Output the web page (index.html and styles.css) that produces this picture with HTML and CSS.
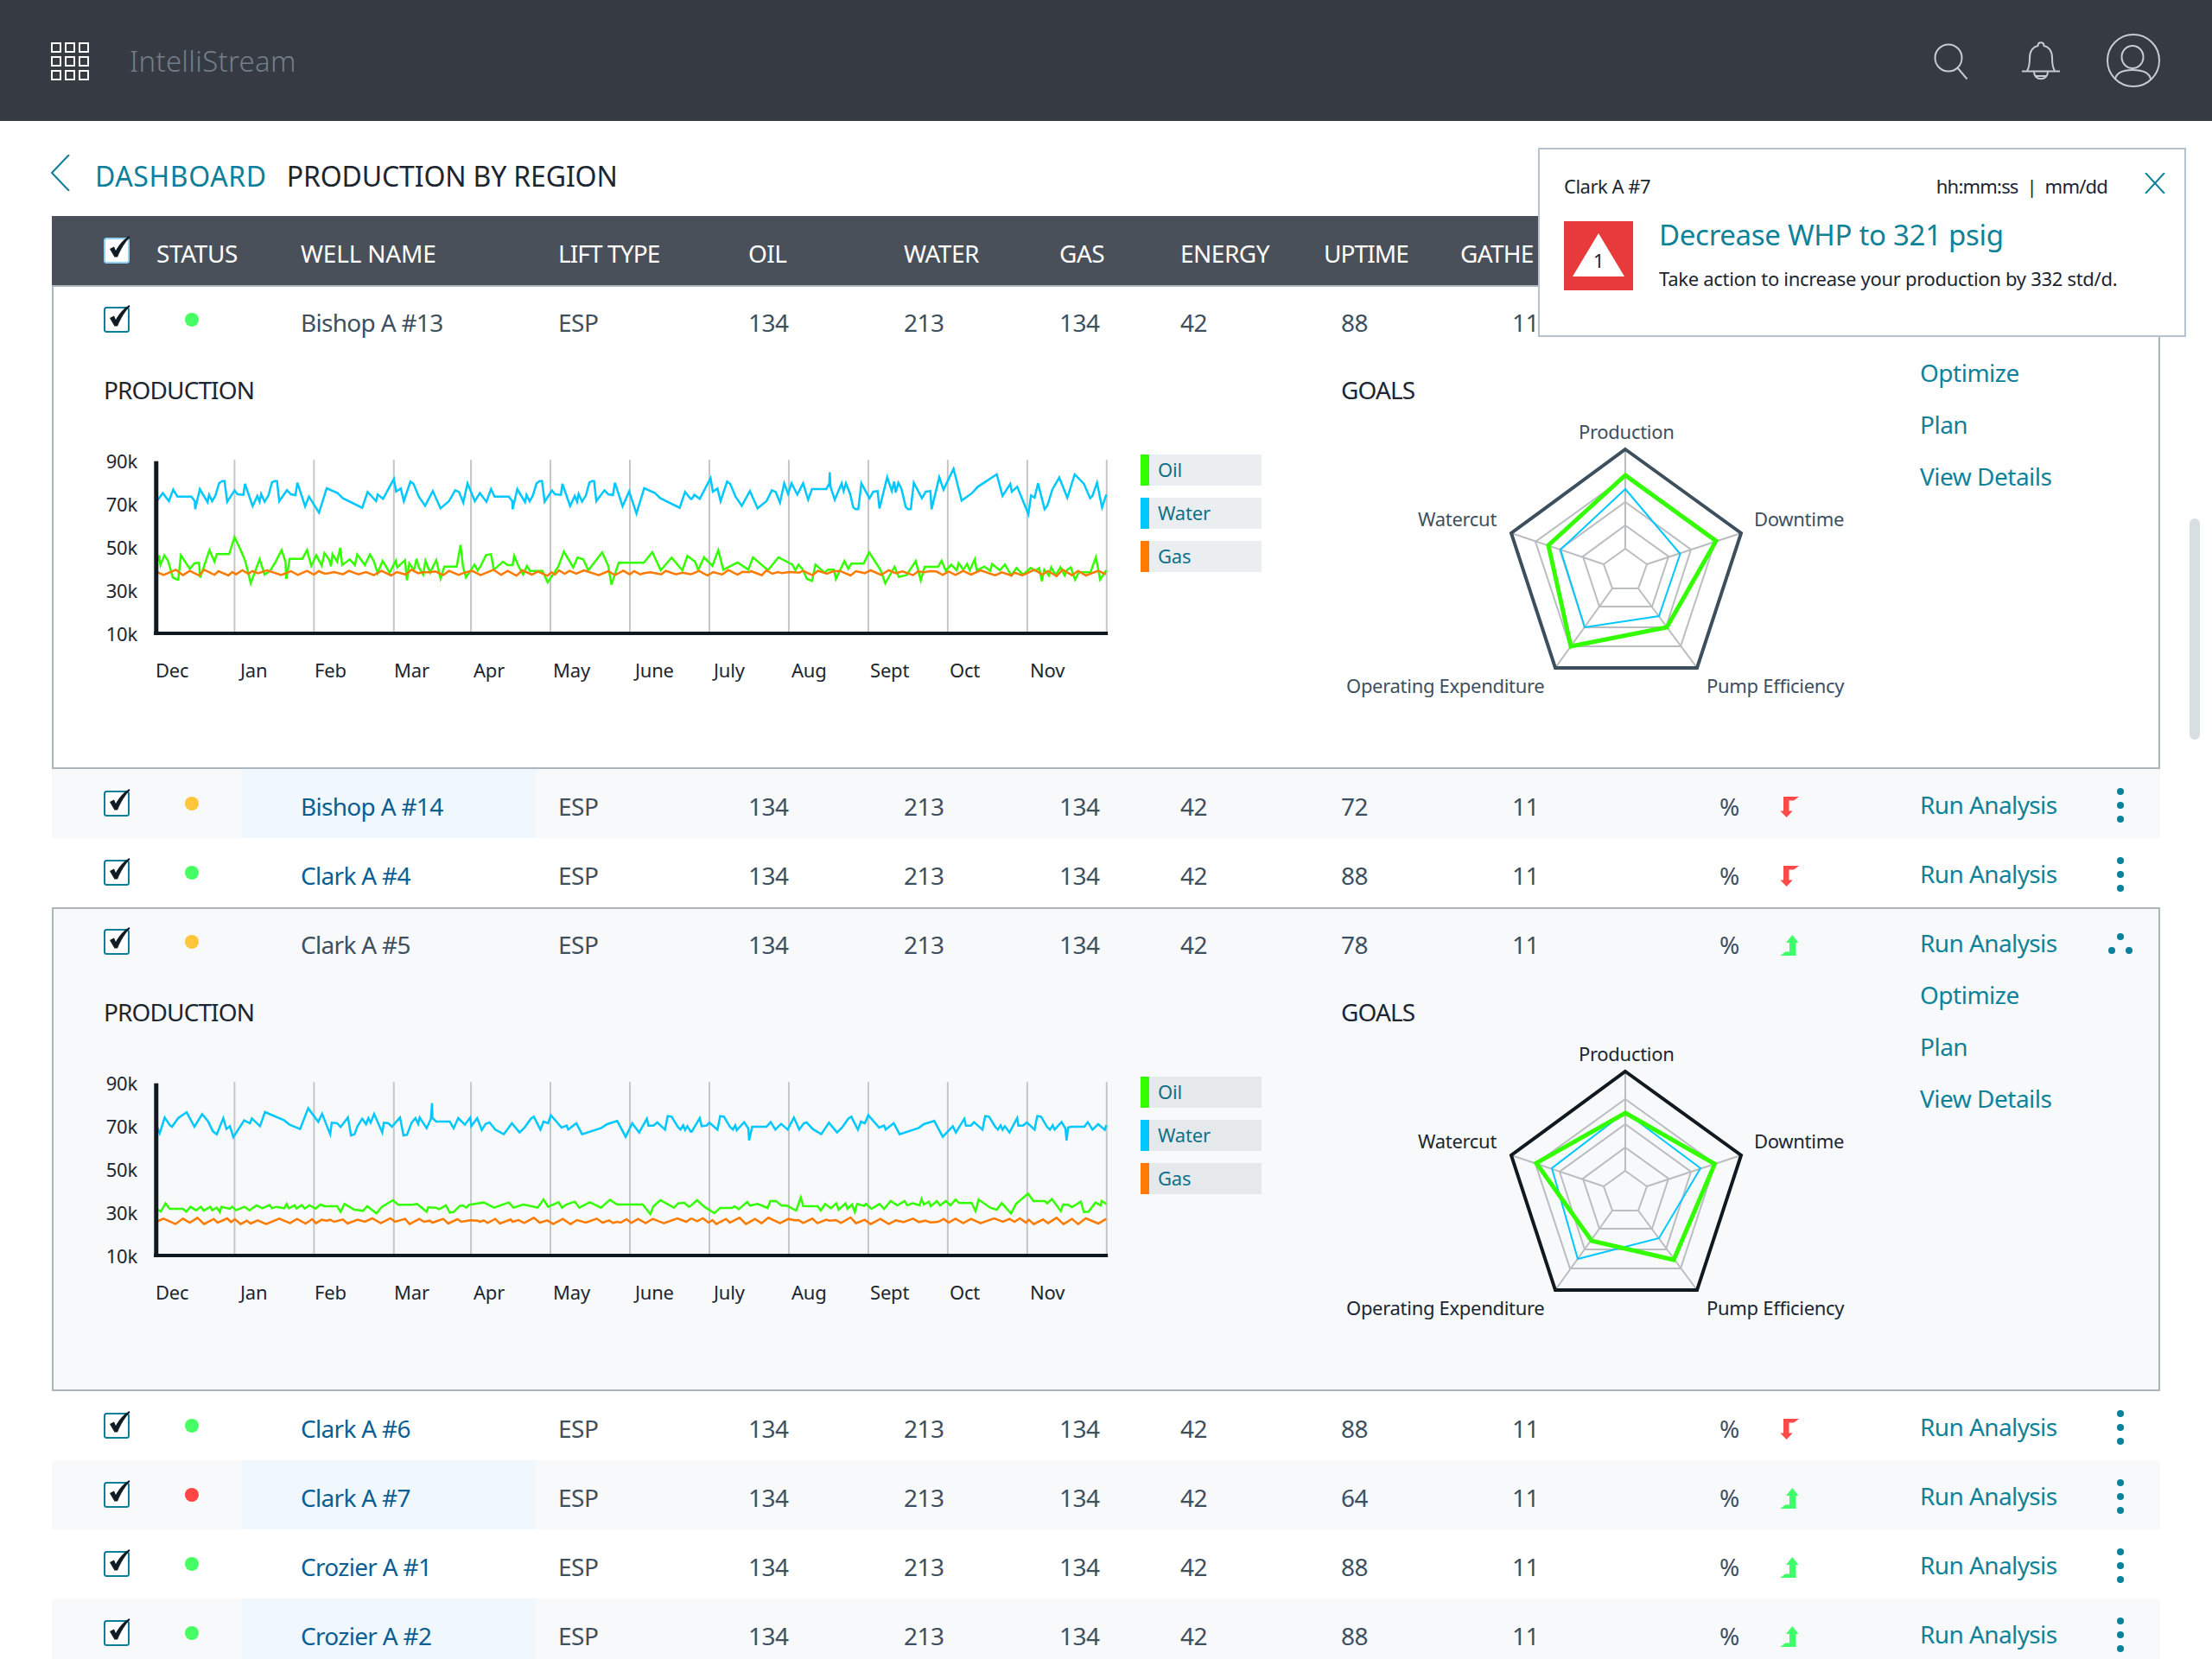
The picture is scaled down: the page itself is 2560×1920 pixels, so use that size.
FILE: index.html
```html
<!DOCTYPE html>
<html lang="en">
<head>
<meta charset="utf-8">
<title>IntelliStream</title>
<link rel="stylesheet" href="styles.css">
</head>
<body>
<svg class="defs" width="0" height="0" aria-hidden="true">
  <symbol id="chk" viewBox="0 -6 32 38">
    <rect x="1" y="1" width="28" height="28" rx="2.5" fill="var(--box-fill)" stroke="var(--box-stroke)" stroke-width="2"/>
    <path d="M7 13 L12 10.5 L14 15 C17 9 23 2 29.5 -2 L30.5 -.5 C25 5 20 13 16 22.5 L12.5 22.5 Z" fill="#111b22"/>
  </symbol>
  <symbol id="down" viewBox="0 0 22 24"><path d="M4 0 H22 L16 4.5 H10.5 V16.5 H14.7 L7.6 24 L.4 16.5 H4 Z" fill="#ff4a4a"/></symbol>
  <symbol id="up" viewBox="0 0 22 24"><path d="M14.3 0 L21.5 9 H18.5 V24 H.4 L6 19.5 H11 V9 H7 Z" fill="#3cff6a"/></symbol>
</svg>

<header class="topbar">
  <div class="apps"><i></i><i></i><i></i><i></i><i></i><i></i><i></i><i></i><i></i></div>
  <div class="brand">IntelliStream</div>
  <div class="topicons">
    <svg class="ic-search" viewBox="0 0 40 42"><ellipse cx="17" cy="17" rx="15.5" ry="15.5"/><path d="M27.5 28.5 L38.5 41.5"/></svg>
    <svg class="ic-bell" viewBox="0 0 46 46"><path d="M7 35 C9.5 31 10 27 10 20 C10 11 15 7 19.5 6 C19.5 1 26.5 1 26.5 6 C31 7 36 11 36 20 C36 27 36.5 31 39 35"/><path d="M1 35.5 H45"/><path d="M15 36 C15 47 31 47 31 36"/><path d="M17 41 H29"/></svg>
    <svg class="ic-user" viewBox="0 0 62 62"><circle cx="31" cy="31" r="30"/><ellipse cx="30" cy="27" rx="12.5" ry="13"/><path d="M10 53 C11 45 20 42 30 42 C41 42 50 45 51 53"/></svg>
  </div>
</header>

<nav class="crumbs">
  <svg class="back" viewBox="0 0 22 42"><path d="M21 0 L1 21 L21 42"/></svg>
  <a class="crumb-link">DASHBOARD</a>
  <span class="crumb-here">PRODUCTION BY REGION</span>
</nav>

<main class="table">
  <div class="row head">
    <div class="c-chk"><svg class="chk on-dark"><use href="#chk"/></svg></div>
    <div class="c-status">STATUS</div>
    <div class="c-name">WELL NAME</div>
    <div class="c-lift">LIFT TYPE</div>
    <div>OIL</div><div>WATER</div><div>GAS</div><div>ENERGY</div><div class="c-uptime-h">UPTIME</div><div class="c-gather-h">GATHERING</div>
  </div>

  <section class="expanded">
    <div class="row">
      <div class="c-chk"><svg class="chk"><use href="#chk"/></svg></div>
      <div class="c-status"><i class="dot green"></i></div>
      <div class="c-name">Bishop A #13</div>
      <div class="c-lift">ESP</div>
      <div>134</div><div>213</div><div>134</div><div>42</div><div class="c-up">88</div><div class="c-gather">11</div>
    </div>
    <div class="detail">
      <div class="d-chart">
        <div class="d-title">PRODUCTION</div>
        <div class="chart">
          <div class="ylabels"><span>90k</span><span>70k</span><span>50k</span><span>30k</span><span>10k</span></div>
          <svg class="plot" viewBox="174.72 90 2477.44 618" preserveAspectRatio="none">
            <g class="grid"><path d="M384 97V693M590 97V693M797 97V693M997 97V693M1203 97V693M1409 97V693M1615 97V693M1821 97V693M2027 97V693M2233 97V693M2439 97V693M2645 97V693"/></g>
            <polyline class="oil" points="181,460 188,428 192,462 202,428 212,448 224,505 235,512 238,512 245,428 268,475 280,456 292,454 295,505 319,410 332,450 338,424 370,424 384,365 400,410 412,448 426,525 449,442 462,495 476,482 490,452 506,410 516,450 518,510 527,440 560,440 572,410 583,465 596,428 610,464 617,420 630,445 634,466 638,425 650,450 658,402 663,462 683,442 696,462 702,425 722,462 735,425 745,448 755,490 768,447 786,488 802,447 806,470 826,445 831,515 837,456 849,480 856,440 862,470 873,495 879,447 891,488 907,445 918,508 928,467 960,467 970,392 976,465 984,505 1006,460 1014,480 1021,468 1036,427 1049,424 1056,478 1080,450 1092,462 1105,462 1109,430 1120,465 1132,495 1142,465 1150,482 1182,482 1196,522 1223,468 1238,415 1262,470 1273,436 1288,442 1301,480 1337,418 1353,465 1361,530 1380,454 1445,454 1467,417 1489,480 1517,436 1545,480 1558,430 1568,440"/>
            <polyline class="gas" points="181,485 200,496 232,478 250,497 268,482 292,498 305,478 332,496 342,483 368,498 378,486 388,494 404,480 420,492 430,483 445,490 468,480 505,496 530,483 548,496 572,482 590,495 602,483 618,492 630,490 642,486 665,494 680,482 705,494 725,486 745,497 765,482 790,498 805,486 828,495 843,478 860,490 875,487 890,487 905,484 925,497 940,482 965,496 980,488 1000,482 1022,497 1055,478 1075,496 1092,482 1115,499 1130,480 1155,495 1170,484 1195,499 1205,487 1215,495 1225,480 1240,492 1252,482 1270,492 1290,480 1328,497 1353,483 1370,497 1392,481 1408,494 1420,483 1435,494 1447,490 1462,487 1490,494 1502,482 1528,494 1545,488 1568,494"/>
            <polyline class="water" points="181,243 198,212 214,240 225,200 236,224 272,224 281,240 282,268 294,198 314,243 318,218 326,240 334,222 344,178 352,170 358,170 365,242 384,203 392,216 407,218 411,180 431,257 443,222 449,242 453,215 462,242 472,220 481,175 488,170 494,170 500,240 520,202 530,216 542,219 547,176 567,258 577,224 603,280 623,195 651,212 665,230 715,263 729,208 751,240 755,217 769,232 797,163 803,207 815,196 823,240 840,172 848,180 862,225 878,256 898,205 918,265 940,240 956,202 966,208 977,245 988,178 1007,240 1020,212 1037,242 1049,198 1058,224 1095,224 1104,240 1105,268 1117,198 1137,243 1141,218 1149,240 1157,222 1167,178 1175,170 1181,170 1188,242 1207,203 1215,216 1230,218 1234,180 1254,257 1266,222 1272,242 1276,215 1285,242 1295,220 1304,175 1311,170 1316,170 1322,240 1343,202 1353,216 1365,219 1370,176 1390,258 1407,206 1426,283 1446,195 1474,212 1488,230 1538,263 1552,208 1568,235"/>
            <g transform="translate(1568 0)">
              <polyline class="oil" points="0,440 10,450 18,480 33,435 55,465 70,410 83,478 120,453 148,478 160,435 199,480 226,435 262,460 270,480 278,460 288,475 300,510 313,517 322,460 345,488 355,478 370,478 375,510 397,448 407,475 415,457 447,457 461,418 490,477 503,525 527,468 538,503 558,497 582,448 595,515 605,468 640,468 649,447 660,482 674,460 688,480 693,455 705,478 715,458 722,480 735,442 740,480 760,467 775,482 780,458 800,480 813,460 830,498 843,472 860,495 880,472 892,482 902,472 909,518 915,478 927,498 933,470 945,497 957,470 968,498 975,478 984,470 995,512 1005,487 1035,487 1049,435 1060,512 1076,480"/>
              <polyline class="gas" points="0,494 20,482 42,498 57,486 80,495 96,479 120,495 133,485 150,487 155,483 183,497 195,480 210,492 225,486 235,490 255,486 280,488 290,482 314,497 328,482 352,492 367,484 385,482 413,498 427,483 450,490 465,480 492,496 512,480 530,490 548,484 575,497 588,484 605,487 618,483 635,484 652,496 667,484 685,496 705,482 725,495 750,480 788,498 805,487 830,498 838,488 858,498 890,478 910,495 925,483 947,500 963,478 987,497 1003,482 1023,498 1055,482 1075,494"/>
              <polyline class="water" points="0,235 8,218 22,232 50,160 56,207 68,196 76,240 93,172 101,180 115,225 131,256 152,205 172,265 195,240 209,202 219,208 230,245 241,178 251,215 260,178 275,217 290,178 303,235 313,198 350,198 358,178 359,140 361,190 372,235 390,178 395,205 401,178 412,215 420,262 426,268 433,268 441,178 462,230 472,207 483,205 488,265 508,157 520,205 526,172 530,210 537,176 545,198 556,260 562,268 569,268 577,176 598,230 608,207 620,205 623,268 643,157 654,200 680,128 701,238 728,212 743,190 792,147 807,222 827,180 831,207 845,190 874,285 881,220 890,228 899,178 916,268 923,256 936,200 954,158 975,228 994,147 1018,180 1034,230 1040,222 1052,176 1065,262 1076,217"/>
            </g>
            <path class="axis-y" d="M181 101V704"/>
            <path class="axis-x" d="M175 699H2648"/>
          </svg>
          <ul class="legend">
            <li class="lg-oil">Oil</li>
            <li class="lg-water">Water</li>
            <li class="lg-gas">Gas</li>
          </ul>
          <div class="xlabels"><span>Dec</span><span>Jan</span><span>Feb</span><span>Mar</span><span>Apr</span><span>May</span><span>June</span><span>July</span><span>Aug</span><span>Sept</span><span>Oct</span><span>Nov</span></div>
        </div>
      </div>
      <div class="d-goals">
        <div class="d-title">GOALS</div>
        <svg class="radar" viewBox="1552 491 660 330">
          <g class="rings">
            <polygon points="1881,635 1906,653 1896,681 1866,681 1856,653"/>
            <polygon points="1881,608 1931,644 1912,702 1851,702 1832,644"/>
            <polygon points="1881,581 1957,636 1928,726 1834,726 1805,636"/>
            <polygon points="1881,552 1985,627 1945,748 1817,748 1777,627"/>
            <path d="M1881 635V520M1906 653L2015 617M1896 681L1964 773M1866 681L1800 773M1856 653L1749 617"/>
          </g>
          <polygon class="r-water" points="1881,566 1944.5,641 1920,713 1834,726 1806,636"/>
          <polygon class="r-oil" points="1881,550 1986,626 1929,726 1818,748 1792,631"/>
          <polygon class="r-outer" points="1881,520 2015,617 1964,773 1800,773 1749,617"/>
          <text x="1827" y="508">Production</text>
          <text x="1641" y="609">Watercut</text>
          <text x="2030" y="609">Downtime</text>
          <text x="1558" y="802">Operating Expenditure</text>
          <text x="1975" y="802">Pump Efficiency</text>
        </svg>
      </div>
      <div class="d-actions"><a>Optimize</a><a>Plan</a><a>View Details</a></div>
    </div>
  </section>

  <div class="row alt link">
    <div class="c-chk"><svg class="chk"><use href="#chk"/></svg></div>
    <div class="c-status"><i class="dot yellow"></i></div>
    <div class="c-name">Bishop A #14</div>
    <div class="c-lift">ESP</div>
    <div>134</div><div>213</div><div>134</div><div>42</div><div class="c-up">72</div><div class="c-gather">11</div>
    <div class="c-pct">%</div><div class="c-arrow"><svg><use href="#down"/></svg></div><a class="c-act">Run Analysis</a><div class="c-more"><i></i><i></i><i></i></div>
  </div>
  <div class="row link">
    <div class="c-chk"><svg class="chk"><use href="#chk"/></svg></div>
    <div class="c-status"><i class="dot green"></i></div>
    <div class="c-name">Clark A #4</div>
    <div class="c-lift">ESP</div>
    <div>134</div><div>213</div><div>134</div><div>42</div><div class="c-up">88</div><div class="c-gather">11</div>
    <div class="c-pct">%</div><div class="c-arrow"><svg><use href="#down"/></svg></div><a class="c-act">Run Analysis</a><div class="c-more"><i></i><i></i><i></i></div>
  </div>

  <section class="expanded tinted">
    <div class="row">
      <div class="c-chk"><svg class="chk"><use href="#chk"/></svg></div>
      <div class="c-status"><i class="dot yellow"></i></div>
      <div class="c-name">Clark A #5</div>
      <div class="c-lift">ESP</div>
      <div>134</div><div>213</div><div>134</div><div>42</div><div class="c-up">78</div><div class="c-gather">11</div>
      <div class="c-pct">%</div><div class="c-arrow"><svg><use href="#up"/></svg></div><a class="c-act">Run Analysis</a>
      <div class="c-more open"><i></i><i></i><i></i></div>
    </div>
    <div class="detail">
      <div class="d-chart">
        <div class="d-title">PRODUCTION</div>
        <div class="chart">
          <div class="ylabels"><span>90k</span><span>70k</span><span>50k</span><span>30k</span><span>10k</span></div>
          <svg class="plot" viewBox="174.72 90 2477.44 618" preserveAspectRatio="none">
            <g class="grid"><path d="M384 97V693M590 97V693M797 97V693M997 97V693M1203 97V693M1409 97V693M1615 97V693M1821 97V693M2027 97V693M2233 97V693M2439 97V693M2645 97V693"/></g>
            <polyline class="gas" points="181,582 200,571 231,590 250,571 268,585 288,568 305,590 330,572 340,585 365,570 375,583 385,573 400,590 416,578 426,588 444,577 466,590 500,571 528,587 546,572 568,588 585,573 595,587 610,575 622,578 632,575 642,582 665,574 677,588 703,575 722,582 741,570 763,587 788,570 800,582 826,572 838,590 863,572 875,582 890,578 897,585 925,572 938,588 962,573 972,582 995,577 1015,578 1020,582 1030,577 1040,586 1060,572 1072,588 1100,574 1105,582 1120,576 1135,586 1160,568 1175,585 1195,577 1210,590 1235,572 1255,590 1272,576 1295,585 1323,571 1338,585 1355,577 1365,586 1375,582 1385,585 1400,573 1413,586 1430,572 1450,587 1468,572 1497,587 1532,570 1555,582 1568,570"/>
            <polyline class="oil" points="181,537 193,546 205,518 216,537 250,537 259,547 270,530 284,542 297,530 304,543 321,530 326,542 338,533 346,548 350,530 372,537 378,530 388,542 410,530 423,542 441,525 456,535 475,524 481,535 492,530 513,535 519,520 525,535 540,525 545,536 558,524 566,536 578,525 594,536 607,522 617,528 650,528 659,547 669,520 695,540 717,544 728,528 752,553 766,530 795,507 808,523 845,523 857,520 882,547 886,532 905,533 915,538 932,525 942,550 952,548 968,527 976,525 985,533 992,523 1030,515 1057,533 1095,515 1107,533 1133,522 1170,533 1185,505 1197,530 1224,514 1233,533 1244,522 1266,512 1278,533 1305,514 1334,533 1357,506 1376,522 1442,522 1462,555 1470,528 1488,507 1523,533 1534,518 1550,516 1562,530 1568,525"/>
            <polyline class="water" points="181,245 190,275 203,220 217,248 222,252 238,222 260,202 280,252 300,208 315,232 328,268 338,278 355,222 363,260 372,250 381,288 409,230 424,240 429,223 450,250 463,201 513,230 527,245 554,260 575,188 601,235 611,207 632,278 636,238 650,240 659,253 678,220 686,282 695,278 703,250 715,224 725,243 731,222 737,238 746,208 767,272 771,238 783,240 792,252 813,220 822,282 831,280 843,238 853,222 860,242 864,220 882,257 893,225 896,170 897,222 907,234 942,234 952,257 964,222 981,245 995,220 998,250 1013,222 1025,263 1035,242 1045,237 1060,262 1082,278 1103,240 1123,272 1136,255 1152,224 1160,217 1177,262 1185,234 1197,240 1204,212 1232,255 1245,248 1249,262 1270,240 1285,278 1335,256 1350,243 1376,232 1398,287 1415,240 1433,272 1453,224 1457,248 1470,248 1480,237 1500,262 1507,215 1517,217 1533,252 1540,262 1547,247 1552,263 1558,250 1568,272"/>
            <g transform="translate(1568 0)">
              <polyline class="oil" points="0,525 15,507 34,530 60,552 75,534 106,534 112,528 123,538 145,513 152,526 172,520 198,534 205,510 220,510 234,526 248,526 272,543 284,498 290,527 328,528 336,543 347,520 362,535 376,518 382,540 400,518 405,537 417,522 424,548 430,520 448,527 453,520 467,537 488,520 500,537 517,510 534,525 553,510 560,525 574,518 592,525 597,503 603,522 616,512 621,528 637,510 645,525 660,510 672,525 685,505 695,517 727,517 737,545 745,505 775,533 792,540 805,517 829,553 842,520 873,484 887,510 917,510 923,518 935,503 958,545 964,522 977,523 987,531 1010,512 1018,548 1030,547 1048,515 1061,525 1064,510 1076,520"/>
              <polyline class="gas" points="0,570 15,580 30,570 45,585 55,576 65,590 90,572 100,585 125,568 142,590 165,572 182,587 200,568 230,587 252,572 268,577 278,576 290,586 314,571 327,587 350,575 358,578 375,576 388,586 413,567 427,587 450,575 465,590 490,572 512,590 530,577 550,583 575,571 590,583 607,578 620,584 640,582 655,572 667,585 685,571 705,587 725,572 750,587 785,570 808,582 825,572 838,582 852,570 868,585 875,575 888,590 912,574 925,587 947,568 965,590 987,572 1003,590 1023,570 1055,588 1076,572"/>
              <polyline class="water" points="0,272 22,222 27,250 40,248 47,238 68,262 75,215 85,217 100,252 108,262 114,247 118,264 137,236 148,258 150,300 158,252 195,252 206,236 218,262 233,242 250,262 266,220 280,262 292,240 299,237 315,260 337,278 357,238 378,272 391,255 407,224 415,217 432,262 440,234 450,240 459,212 487,255 500,248 504,262 525,240 540,278 590,256 603,243 630,232 652,287 678,250 686,272 708,224 712,248 725,248 733,236 755,262 762,215 772,217 788,252 795,262 802,247 807,262 813,250 825,272 845,222 848,248 860,248 870,237 890,262 897,215 907,217 922,252 930,262 937,247 942,262 960,236 970,258 973,300 977,255 985,252 1019,252 1028,236 1040,262 1055,243 1072,263 1076,246"/>
            </g>
            <path class="axis-y" d="M181 101V704"/>
            <path class="axis-x" d="M175 699H2648"/>
          </svg>
          <ul class="legend">
            <li class="lg-oil">Oil</li>
            <li class="lg-water">Water</li>
            <li class="lg-gas">Gas</li>
          </ul>
          <div class="xlabels"><span>Dec</span><span>Jan</span><span>Feb</span><span>Mar</span><span>Apr</span><span>May</span><span>June</span><span>July</span><span>Aug</span><span>Sept</span><span>Oct</span><span>Nov</span></div>
        </div>
      </div>
      <div class="d-goals">
        <div class="d-title">GOALS</div>
        <svg class="radar" viewBox="1552 491 660 330">
          <g class="rings">
            <polygon points="1881,635 1906,653 1896,681 1866,681 1856,653"/>
            <polygon points="1881,608 1931,644 1912,702 1851,702 1832,644"/>
            <polygon points="1881,581 1957,636 1928,726 1834,726 1805,636"/>
            <polygon points="1881,552 1985,627 1945,748 1817,748 1777,627"/>
            <path d="M1881 635V520M1906 653L2015 617M1896 681L1964 773M1866 681L1800 773M1856 653L1749 617"/>
          </g>
          <polygon class="r-water" points="1881,567 1968,632 1920,713 1826,737 1796,632"/>
          <polygon class="r-oil" points="1881,568 1984.5,627 1937,738 1842,716 1778,626"/>
          <polygon class="r-outer" points="1881,520 2015,617 1964,773 1800,773 1749,617"/>
          <text x="1827" y="508">Production</text>
          <text x="1641" y="609">Watercut</text>
          <text x="2030" y="609">Downtime</text>
          <text x="1558" y="802">Operating Expenditure</text>
          <text x="1975" y="802">Pump Efficiency</text>
        </svg>
      </div>
      <div class="d-actions"><a>Optimize</a><a>Plan</a><a>View Details</a></div>
    </div>
  </section>

  <div class="row link">
    <div class="c-chk"><svg class="chk"><use href="#chk"/></svg></div>
    <div class="c-status"><i class="dot green"></i></div>
    <div class="c-name">Clark A #6</div>
    <div class="c-lift">ESP</div>
    <div>134</div><div>213</div><div>134</div><div>42</div><div class="c-up">88</div><div class="c-gather">11</div>
    <div class="c-pct">%</div><div class="c-arrow"><svg><use href="#down"/></svg></div><a class="c-act">Run Analysis</a><div class="c-more"><i></i><i></i><i></i></div>
  </div>
  <div class="row alt link">
    <div class="c-chk"><svg class="chk"><use href="#chk"/></svg></div>
    <div class="c-status"><i class="dot red"></i></div>
    <div class="c-name">Clark A #7</div>
    <div class="c-lift">ESP</div>
    <div>134</div><div>213</div><div>134</div><div>42</div><div class="c-up">64</div><div class="c-gather">11</div>
    <div class="c-pct">%</div><div class="c-arrow"><svg><use href="#up"/></svg></div><a class="c-act">Run Analysis</a><div class="c-more"><i></i><i></i><i></i></div>
  </div>
  <div class="row link">
    <div class="c-chk"><svg class="chk"><use href="#chk"/></svg></div>
    <div class="c-status"><i class="dot green"></i></div>
    <div class="c-name">Crozier A #1</div>
    <div class="c-lift">ESP</div>
    <div>134</div><div>213</div><div>134</div><div>42</div><div class="c-up">88</div><div class="c-gather">11</div>
    <div class="c-pct">%</div><div class="c-arrow"><svg><use href="#up"/></svg></div><a class="c-act">Run Analysis</a><div class="c-more"><i></i><i></i><i></i></div>
  </div>
  <div class="row alt link">
    <div class="c-chk"><svg class="chk"><use href="#chk"/></svg></div>
    <div class="c-status"><i class="dot green"></i></div>
    <div class="c-name">Crozier A #2</div>
    <div class="c-lift">ESP</div>
    <div>134</div><div>213</div><div>134</div><div>42</div><div class="c-up">88</div><div class="c-gather">11</div>
    <div class="c-pct">%</div><div class="c-arrow"><svg><use href="#up"/></svg></div><a class="c-act">Run Analysis</a><div class="c-more"><i></i><i></i><i></i></div>
  </div>
</main>

<aside class="toast">
  <div class="toast-top">
    <span>Clark A #7</span>
    <span class="toast-time">hh:mm:ss&nbsp; | &nbsp;mm/dd</span>
    <svg class="toast-x" viewBox="0 0 24 24"><path d="M1 0 L23 24 M23 0 L1 24"/></svg>
  </div>
  <div class="toast-body">
    <div class="alert-badge"><span class="alert-tri"></span><span class="alert-num">1</span></div>
    <div>
      <div class="toast-title">Decrease WHP to 321 psig</div>
      <div class="toast-text">Take action to increase your production by 332 std/d.</div>
    </div>
  </div>
</aside>

<div class="scrollbar"></div>
</body>
</html>
```

FILE: styles.css
```css
* { box-sizing: border-box; }
html, body { margin: 0; padding: 0; }
body {
  position: relative;
  width: 2560px;
  height: 1920px;
  overflow: hidden;
  background: #fff;
  font-family: "Noto Sans", "Open Sans", sans-serif;
  font-size: 28px;
  color: #3e4f5e;
  letter-spacing: -0.5px;
}
.defs { position: absolute; }
i { display: block; font-style: normal; }
a { color: #0d8299; }

/* top bar */
.topbar {
  height: 140px;
  background: #363a43;
  display: flex;
  align-items: center;
  padding-left: 59px;
}
.apps {
  display: grid;
  grid-template-columns: repeat(3, 12px);
  grid-auto-rows: 12px;
  gap: 4px;
  margin-top: 2px;
}
.apps i { border: 2px solid #fff; }
.brand {
  margin-left: 47px;
  font-size: 33px;
  font-weight: 300;
  letter-spacing: 0.25px;
  color: #737e88;
}
.topicons {
  position: relative;
  margin-left: auto;
  display: flex;
  align-items: center;
  padding-right: 60px;
}
.topicons svg { fill: none; stroke: #c5ccd2; stroke-width: 2; display: block; }
.ic-search { width: 40px; height: 42px; margin-top: 2px; }
.ic-bell { width: 46px; height: 46px; margin-left: 61px; }
.ic-user { width: 62px; height: 62px; margin-left: 53px; }

/* breadcrumb */
.crumbs {
  height: 110px;
  display: flex;
  align-items: flex-start;
  padding-left: 59px;
  font-size: 32px;
  line-height: 110px;
  padding-top: 9px;
}
.back { width: 22px; height: 42px; margin-top: 30px; margin-right: 29px; fill: none; stroke: #0d7f9a; stroke-width: 2; flex: none; }
.crumb-link { color: #0d7f9a; letter-spacing: 0.6px; }
.crumb-here { color: #1b2630; margin-left: 23px; letter-spacing: -0.15px; }

/* table */
.table { margin-left: 60px; width: 2440px; }
.row {
  display: grid;
  grid-template-columns: 121px 99px 340px 246px 180px 180px 140px 166px 158px 300px 70px 163px 207px 73px;
  grid-template-rows: 80px;
  height: 80px;
  line-height: 87px;
  white-space: nowrap;
}
.head { background: #4a5059; color: #fff; }
.alt { background: #f7f9fb; }
.alt .c-name { background: #f0f7fd; }
.link .c-name { color: #0b5e92; }
.c-chk { padding: 19px 0 0 60px; line-height: 0; }
.chk { display: block; width: 32px; height: 38px; --box-fill: #fff; --box-stroke: #0b7f9b; }
.chk.on-dark { --box-stroke: #8fd0f5; }
.c-name { padding-left: 68px; letter-spacing: -0.7px; }
.c-lift { padding-left: 26px; }
.c-status { letter-spacing: -0.4px; }
.head .c-name { letter-spacing: -0.2px; }
.head .c-lift { letter-spacing: -0.9px; }
.c-up { padding-left: 20px; }
.c-gather { padding-left: 60px; }
.c-uptime-h { letter-spacing: -0.9px; }
.c-gather-h { letter-spacing: -0.7px; width: 87px; overflow: hidden; }
.dot { width: 16px; height: 16px; border-radius: 50%; margin: 32px 0 0 33px; }
.green { background: #47ff64; }
.yellow { background: #ffc63b; }
.red { background: #ff4545; }
.c-arrow svg { display: block; width: 22px; height: 24px; margin-top: 32px; }
.c-act { line-height: 82px; letter-spacing: -0.6px; margin-left: -1px; }
.c-more { position: relative; }
.c-more i { width: 8px; height: 8px; border-radius: 50%; background: #0b7f9b; margin: 0 0 8px 20px; }
.c-more i:first-child { margin-top: 22px; }
.c-more.open i { position: absolute; margin: 0; }
.c-more.open i:nth-child(1) { left: 20px; top: 30px; }
.c-more.open i:nth-child(2) { left: 10px; top: 46px; }
.c-more.open i:nth-child(3) { left: 30px; top: 46px; }

/* expanded row */
.expanded {
  height: 560px;
  box-shadow: inset 0 0 0 2px #adb6bd;
}
.tinted { background: #f7f9fb; }
.tinted .radar text { fill: #1b2630; }
.tinted .r-outer { stroke: #10191f; }
.tinted .legend li { background-color: #e6e9ec; }
.detail { display: flex; height: 480px; }
.d-chart { width: 1492px; padding-left: 60px; flex: none; }
.d-goals { width: 671px; flex: none; }
.d-title {
  color: #1b2630;
  height: 81px;
  padding-top: 1px;
  line-height: 80px;
  margin-bottom: 17px;
  letter-spacing: -0.9px;
}
.chart {
  display: grid;
  grid-template-columns: 58px 1106px 36px 140px;
  grid-template-rows: 250px 30px;
  font-size: 22px;
  color: #1b2630;
  letter-spacing: -0.2px;
}
.ylabels { display: flex; flex-direction: column; width: 39px; text-align: right; line-height: 50px; }
.ylabels span { display: block; height: 50px; }
.plot { grid-column: 2; width: 1106px; height: 206px; margin-top: 22px; display: block; overflow: visible; }
.plot polyline, .plot path { fill: none; vector-effect: non-scaling-stroke; }
.grid path { stroke: #c4c6c8; stroke-width: 2; }
.axis-y { stroke: #10191f; stroke-width: 5; }
.axis-x { stroke: #10191f; stroke-width: 4; }
.plot polyline { stroke-width: 2.5; stroke-linejoin: miter; }
.oil { stroke: #33ff00; }
.water { stroke: #00c8ff; }
.gas { stroke: #ff7a00; }
.legend { grid-column: 4; list-style: none; margin: 18px 0 0; padding: 0; color: #0d7188; }
.legend li {
  height: 36px;
  line-height: 35px;
  margin-bottom: 14px;
  padding-left: 10px;
  background: #ebeef1;
  border-left: 10px solid;
}
.legend .lg-oil { border-color: #33ff00; }
.legend .lg-water { border-color: #00c8ff; }
.legend .lg-gas { border-color: #ff7a00; }
.xlabels {
  grid-column: 2 / 5;
  grid-row: 2;
  display: grid;
  grid-template-columns: 98px 86px 92px 92px 92px 95px 91px 90px 91px 92px 93px 60px;
  padding-left: 2px;
  line-height: 35px;
}

.radar { display: block; width: 660px; height: 330px; margin-top: -17px; overflow: visible; }
.radar text { font-size: 22px; fill: #3e4f5e; letter-spacing: -0.3px; }
.rings polygon, .rings path { fill: none; stroke: #babdc0; stroke-width: 2; }
.r-water { fill: none; stroke: #00c8ff; stroke-width: 2; }
.r-oil { fill: none; stroke: #33ff00; stroke-width: 5; }
.r-outer { fill: none; stroke: #3d4f5c; stroke-width: 4; }

.d-actions { display: flex; flex-direction: column; margin-left: -1px; }
.d-actions a { height: 60px; line-height: 42px; }

/* notification */
.toast {
  position: absolute;
  left: 1780px;
  top: 171px;
  width: 750px;
  height: 219px;
  background: #fff;
  border: 2px solid #b6c2cd;
  padding: 0 22px 0 28px;
  font-size: 22px;
  color: #1b2630;
}
.toast-top { display: flex; align-items: flex-start; height: 83px; line-height: 30px; padding-top: 27px; }
.toast-time { margin-left: auto; margin-right: 43px; letter-spacing: -0.8px; }
.toast-x { width: 24px; height: 24px; fill: none; stroke: #0d8299; stroke-width: 2; flex: none; }
.toast-body { display: flex; align-items: flex-start; gap: 30px; }
.alert-badge { position: relative; width: 80px; height: 80px; background: #e83a3a; flex: none; overflow: hidden; }
.alert-tri {
  position: absolute;
  left: 10px;
  top: 14px;
  width: 0;
  height: 0;
  border-left: 30px solid transparent;
  border-right: 30px solid transparent;
  border-bottom: 50px solid #fff;
}
.alert-num { position: absolute; left: 0; width: 80px; text-align: center; top: 30px; line-height: 30px; }
.toast-title { font-size: 33px; color: #0d8299; line-height: 40px; margin-top: -4px; letter-spacing: -0.3px; }
.toast-text { margin-top: 15px; line-height: 30px; letter-spacing: -0.3px; }

.scrollbar {
  position: absolute;
  left: 2534px;
  top: 600px;
  width: 12px;
  height: 256px;
  border-radius: 6px;
  background: #d8dfe2;
}
```
